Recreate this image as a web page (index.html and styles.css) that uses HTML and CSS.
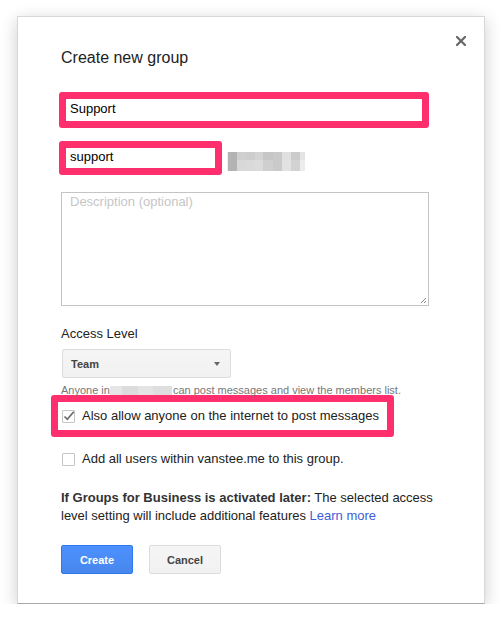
FILE: index.html
```html
<!DOCTYPE html>
<html>
<head>
<meta charset="utf-8">
<link rel="stylesheet" href="styles.css">
</head>
<body>
<div class="stage">
  <div class="dialog">
    <svg class="close" width="10" height="10" viewBox="0 0 10 10"><path d="M1 1L9 9M9 1L1 9" stroke="#666" stroke-width="2.2" stroke-linecap="square" fill="none"/></svg>
    <h1 class="title">Create new group</h1>
    <div class="mark mark-name"><div class="field">Support</div></div>
    <div class="email-row">
      <div class="mark mark-email"><div class="field field-email">support</div></div>
      <div class="blur">
        <span style="background:#b3b3b3"></span><span style="background:#cfcfcf"></span><span style="background:#cdcdcd"></span><span style="background:#d3d3d3"></span><span style="background:#c6c6c6"></span><span style="background:#c9c9c9"></span><span style="background:#e0e0e0"></span><span style="background:#cbcbcb"></span><span style="background:#e4e4e4"></span>
        <span style="background:#b3b3b3"></span><span style="background:#d8d8d8"></span><span style="background:#dadada"></span><span style="background:#dcdcdc"></span><span style="background:#cfcfcf"></span><span style="background:#cacaca"></span><span style="background:#e2e2e2"></span><span style="background:#d2d2d2"></span><span style="background:#ececec"></span>
      </div>
    </div>
    <div class="textarea">
      <span class="placeholder">Description (optional)</span>
      <svg class="grip" width="8" height="8" viewBox="0 0 8 8"><path d="M7 2L2 7M7 5L5 7" stroke="#888" stroke-width="1" fill="none"/></svg>
    </div>
    <div class="label">Access Level</div>
    <div class="select"><span>Team</span><i class="arrow"></i></div>
    <div class="help">Anyone in<span class="blur-inline"></span>can post messages and view the members list.</div>
    <div class="mark mark-check">
      <div class="check-row">
        <span class="checkbox"><svg width="13" height="13" viewBox="0 0 13 13"><path d="M2.5 6.5L5.3 9.3L11.8 1.8" stroke="#6b6b6b" stroke-width="1.7" fill="none"/></svg></span>
        <span>Also allow anyone on the internet to post messages</span>
      </div>
    </div>
    <div class="check-row row-plain">
      <span class="checkbox"></span>
      <span>Add all users within vanstee.me to this group.</span>
    </div>
    <p class="note"><b>If Groups for Business is activated later:</b> The selected access level setting will include additional features <a class="link">Learn more</a></p>
    <div class="buttons">
      <div class="btn btn-primary">Create</div>
      <div class="btn btn-default">Cancel</div>
    </div>
  </div>
</div>
</body>
</html>
```
FILE: styles.css
```css
* { box-sizing: border-box; }
html, body { margin: 0; padding: 0; background: #fff; }
body { font-family: "Liberation Sans", Arial, sans-serif; color: #222; font-size: 13px; }
.stage { padding: 16px 0 0 17px; }
.dialog {
  position: relative;
  width: 468px;
  height: 588px;
  background: #fff;
  border: 1px solid #d8d8d8;
  border-bottom-color: #a8a8a8;
  box-shadow: 0 4px 16px rgba(0,0,0,0.2);
  padding: 31px 0 0 43px;
}
.close { position: absolute; top: 19px; right: 18px; }
.title { margin: 0; font-size: 16px; line-height: 20px; font-weight: normal; color: #222; }
.mark { border: 7px solid #ff2f6e; border-radius: 3px; background: #fff; }
.mark-name { margin: 24px 0 0 -2px; width: 370px; }
.field { height: 22px; line-height: 20px; padding-left: 4px; color: #000; font-size: 13px; }
.email-row { display: flex; align-items: flex-start; margin-top: 13px; margin-left: -2px; }
.mark-email { width: 163px; }
.field-email { height: 20px; line-height: 18px; }
.blur {
  margin: 11px 0 0 5px;
  display: grid;
  grid-template-columns: 1px 9px 10px 8px 8px 10px 9px 9px 9px 5px;
  grid-template-rows: 8px 11px;
  grid-auto-flow: row;
  width: 78px;
  background: #f0f0f0;
}
.blur span:nth-child(1), .blur span:nth-child(10) { grid-column-start: 2; }
.textarea {
  position: relative;
  margin-top: 17px;
  width: 368px;
  height: 114px;
  border: 1px solid #c4c4c4;
  padding: 1px 0 0 8px;
  line-height: 16px;
}
.placeholder { color: #c6c6c6; font-size: 13px; }
.grip { position: absolute; right: 1px; bottom: 1px; }
.label { margin-top: 20px; line-height: 16px; font-size: 13px; color: #222; }
.select {
  margin: 7px 0 0 1px;
  width: 169px;
  height: 29px;
  display: flex;
  align-items: center;
  justify-content: space-between;
  padding: 0 10px 0 8px;
  background: linear-gradient(#f5f5f5, #f1f1f1);
  border: 1px solid #dcdcdc;
  border-radius: 2px;
  font-size: 11px;
  font-weight: bold;
  color: #444;
}
.arrow { width: 0; height: 0; border-left: 3.5px solid transparent; border-right: 3.5px solid transparent; border-top: 4px solid #666; }
.help { margin-top: 6px; font-size: 11px; line-height: 12px; color: #777; }
.blur-inline { display: inline-block; width: 62px; height: 9px; vertical-align: -1px; background: linear-gradient(90deg, #e6e6e6 0 20%, #dcdcdc 20% 45%, #e4e4e4 45% 70%, #dedede 70% 100%); margin-right: 1px; }
.mark-check { margin: -1px 0 0 -10px; width: 343px; }
.check-row { display: flex; align-items: center; gap: 7px; font-size: 13px; color: #222; line-height: 16px; }
.mark-check .check-row { height: 28px; padding-left: 4px; }
.row-plain { margin-top: 14px; height: 16px; padding-left: 1px; }
.checkbox { width: 13px; height: 13px; border: 1px solid #c6c6c6; border-radius: 1px; background: #fff; position: relative; flex: none; }
.checkbox svg { position: absolute; left: -1px; top: -1px; }
.note { margin: 22px 0 0; width: 380px; font-size: 13px; line-height: 18px; color: #222; }
.note b { color: #333; }
.link { color: #3f5ed6; text-decoration: none; }
.buttons { margin-top: 20px; display: flex; gap: 16px; }
.btn {
  width: 72px;
  height: 29px;
  border-radius: 2px;
  font-size: 11px;
  font-weight: bold;
  display: flex;
  align-items: center;
  justify-content: center;
}
.btn-primary { background: linear-gradient(#4d90fe, #4787ed); border: 1px solid #3079ed; color: #fff; }
.btn-default { background: linear-gradient(#f5f5f5, #f1f1f1); border: 1px solid #dcdcdc; color: #444; }
```
